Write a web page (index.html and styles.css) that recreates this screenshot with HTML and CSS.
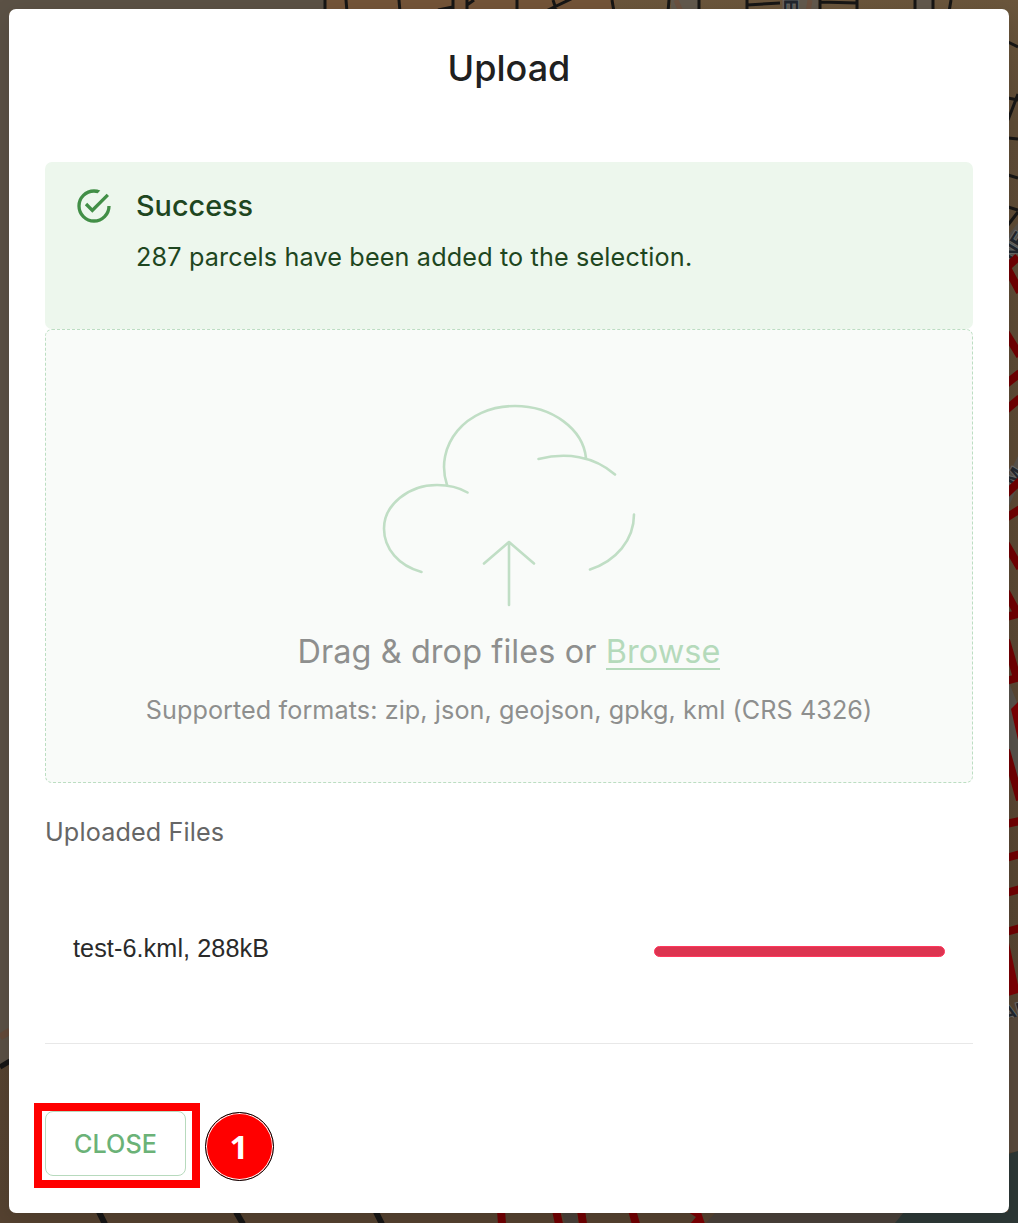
FILE: index.html
```html
<!DOCTYPE html>
<html lang="en">
<head>
<meta charset="utf-8">
<title>Upload</title>
<link rel="stylesheet" href="styles.css">
</head>
<body>
<svg class="map" viewBox="0 0 1018 1223" aria-hidden="true">
  <defs>
    <linearGradient id="land" x1="0" y1="0" x2="0" y2="1"><stop offset="0" stop-color="#6b563c"/><stop offset=".1" stop-color="#5f4c36"/><stop offset="1" stop-color="#554230"/></linearGradient>
  </defs>
  <rect width="1018" height="1223" fill="url(#land)"/>
  <path d="M0 0H325V12H9V1061L0 1067Z" fill="#5b5145"/>
  <path d="M325 0H615V12H325Z" fill="#745438"/>
  <path d="M671 0H698V12H671ZM783 0H818V12H783ZM916 0H933V12H916Z" fill="#62594d"/>
  <path d="M676 0L681 12M810 0L808 12" stroke="#6b5140" stroke-width="5"/>
  <path d="M0 1037L10 1031" stroke="#644a39" stroke-width="7"/>
  <g fill="none" stroke="#171615" stroke-width="3">
    <path d="M325 0V12M346 0L347 12M399 0L400 12M453 0V12M438 10L453 7M467 0V12M467 5L474 0M517 0V12M546 11L573 -2M553 0L556 9M612 0L614 12M669 0L668 12M699 0V12M747 0V12M747 5L780 3M820 2L857 3M820 0V12M857 0V12M915 0V12M933 0V12M951 0L949 12"/>
    <path d="M1008 42L1018 47M1008 98L1018 100M1008 120L1018 94M1008 138L1018 139M1008 175L1018 178M1008 207L1018 210M1008 225L1018 212"/>
    <path d="M0 1067L10 1061" stroke-width="5"/>
    <path d="M99 1212L105 1224M236 1212L243 1224M376 1212L382 1224" stroke-width="6"/>
  </g>
  <path d="M1008 235L1018 223V253L1008 262ZM1008 476L1018 456V486L1008 508ZM1008 680L1018 705V798L1008 760Z" fill="#57514a"/>
  <g class="street">
    <text x="784" y="-1" transform="rotate(90 784 -1)">E</text>
    <text x="1013" y="262" transform="rotate(-58 1013 262)">NE</text>
    <text x="1016" y="488" transform="rotate(-58 1016 488)">M</text>
    <text x="1004" y="1022" transform="rotate(-16 1004 1022)">AL</text>
  </g>
  <g fill="none" stroke="#700002" stroke-width="8">
    <path d="M1006 268L1018 257M1006 266L1020 292M1006 333L1020 356M1006 384L1020 373M1006 410L1020 398M1006 494L1020 481M1006 518L1020 509M1006 544L1020 568M1006 592L1018 614L1006 617M1006 640L1017 678L1006 681M1006 750L1020 800M1006 824L1020 821M1006 858L1020 854M1006 893L1020 889M1006 932L1020 928"/>
    <path d="M501 1210L502 1224M556 1210L559 1224M581 1210L583 1224M632 1210L636 1224"/>
  </g>
  <path d="M1011 709L1018 702V740ZM1008 938L1018 985V993L1008 996ZM688 1212H701L705 1224H690L696 1217Z" fill="#7c0003"/>
  <path d="M562 1212H576L578 1223H565ZM716 1212H908L896 1223H706Z" fill="#494039"/>
  <path d="M1008 1020L1018 1016V1152H1008Z" fill="#594a3c"/>
  <path d="M1008 1154L1018 1151V1223H895L904 1212H1008Z" fill="#2d3836"/>
</svg>

<main class="dialog">
  <h1 class="title">Upload</h1>

  <section class="alert">
    <svg class="alert-icon" viewBox="0 0 24 24"><path fill="#428f47" d="M20 12a8 8 0 0 1-8 8 8 8 0 0 1-8-8 8 8 0 0 1 8-8c.76 0 1.5.11 2.2.31l1.57-1.57A9.822 9.822 0 0 0 12 2 10 10 0 0 0 2 12a10 10 0 0 0 10 10 10 10 0 0 0 10-10M7.91 10.08 6.5 11.5 11 16 21 6l-1.41-1.42L11 13.17Z"/></svg>
    <div>
      <h2 class="alert-title">Success</h2>
      <p class="alert-text">287 parcels have been added to the selection.</p>
    </div>
  </section>

  <section class="dropzone">
    <svg class="cloud" viewBox="0 0 280 230">
      <path d="M51.5 182C29 176 14 159 14 138.500C14 115 38 95 67 95C78.500 95 89 97.500 97.500 102.500M77 95C64 56 95 16 145 16C182 16 213 39 216 68M168.500 69C196 62 224 66 245 84.500M264 124.500C264 150 246 171 220 179.500M139 215V152M114 173.500L139 152L164 173.500"/>
    </svg>
    <p class="drop-text">Drag &amp; drop files or <a class="browse">Browse</a></p>
    <p class="formats">Supported formats: zip, json, geojson, gpkg, kml (CRS 4326)</p>
  </section>

  <h3 class="files-title">Uploaded Files</h3>
  <div class="file">
    <span class="file-name">test-6.kml, 288kB</span>
    <div class="progress"></div>
  </div>

  <footer class="actions">
    <div class="highlight"><button class="close">CLOSE</button></div>
    <span class="step">1</span>
  </footer>
</main>
</body>
</html>
```
FILE: styles.css
```css
* { box-sizing: border-box; }
body { margin: 0; padding: 9px; width: 1018px; height: 1223px; overflow: hidden; background: #5f4c36; font-family: Inter, sans-serif; }
h1, h2, h3, p { margin: 0; font-weight: 400; white-space: nowrap; }
.map { position: absolute; left: 0; top: 0; width: 1018px; height: 1223px; }
.street { font: 700 21px "Liberation Sans", sans-serif; fill: #22262d; stroke: #6b6b69; stroke-width: 2px; paint-order: stroke; }
.dialog { position: relative; display: flex; flex-direction: column; height: 1204px; padding: 0 36px; border-radius: 7px; background: #fff; box-shadow: 0 6px 24px rgba(0, 0, 0, .12); }
.title { height: 153px; padding-top: 36px; font-size: 36px; line-height: 46px; font-weight: 500; text-align: center; color: #202020; }
.alert { display: flex; gap: 22px; height: 167px; padding: 24px 29px; border-radius: 7px; background: #edf7ed; color: #1e4620; }
.alert-icon { flex: none; width: 40px; height: 40px; }
.alert-title { font-size: 28.8px; line-height: 40px; font-weight: 500; }
.alert-text { margin-top: 12px; font-size: 25.2px; line-height: 38px; letter-spacing: .15px; }
.dropzone { display: flex; flex-direction: column; align-items: center; height: 454px; padding-top: 60px; border: 1px dashed #bcdec2; border-radius: 7px; background: #f9fbf9; color: #8e8f8e; }
.cloud { width: 280px; height: 230px; margin-left: 2px; fill: none; stroke: #c0dec5; stroke-width: 2.6; stroke-linecap: round; stroke-linejoin: round; }
.drop-text { margin-top: 9px; font-size: 32.4px; line-height: 46px; letter-spacing: .1px; }
.browse { display: inline-block; height: 41px; border-bottom: 2px solid #b5dabb; color: #b5dabb; }
.formats { margin-top: 16px; font-size: 25.2px; line-height: 38px; letter-spacing: .08px; }
.files-title { margin-top: 30px; font-size: 25.2px; line-height: 38px; letter-spacing: .13px; color: #666; }
.file { display: flex; align-items: center; justify-content: space-between; height: 193px; padding: 2px 28px 0; border-bottom: 1px solid #e8e8e8; }
.file-name { font: 25.2px/36px "Liberation Sans", sans-serif; letter-spacing: .09px; color: #2a2a2a; }
.progress { width: 291px; height: 11px; margin-top: 6px; border: 1px solid #ff365c; border-radius: 6px; background: #dc3450; }
.actions { display: flex; align-items: flex-start; gap: 4.5px; margin: 59px 0 0 -11px; }
.highlight { width: 166px; height: 85px; padding: 0 3px; border: 8px solid #f00; }
.close { display: block; width: 141px; height: 65px; padding: 2px 0 0; border: 1px solid #b7dabd; border-radius: 8px; background: #fff; color: #6bb277; font: 500 25.2px/61px Inter, sans-serif; }
.step { display: grid; place-items: center; width: 69px; height: 69px; margin-top: 8.500px; border: 1px solid #000; border-radius: 50%; background: #f00; box-shadow: inset 0 0 0 1px #fff; color: #fff; font: 700 33px/67px "Noto Sans", sans-serif; }
```
